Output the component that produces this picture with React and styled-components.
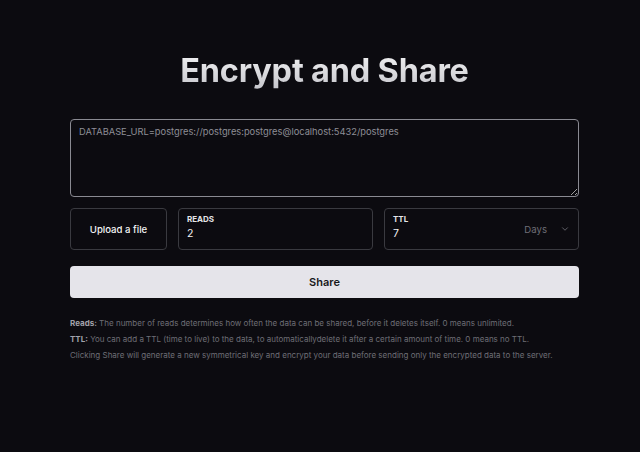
import React from 'react';
import styled, { createGlobalStyle } from 'styled-components';

const GlobalStyle = createGlobalStyle`
  html, body {
    margin: 0;
    padding: 0;
    background: #0c0b10;
    font-family: Inter, "Noto Sans", sans-serif;
  }
  * { box-sizing: border-box; }
`;

const Page = styled.main`
  width: 640px;
  height: 452px;
  background: #0c0b10;
  display: flex;
  flex-direction: column;
  align-items: center;
  padding-top: 51px;
  padding-left: 9px;
`;

const Title = styled.h1`
  margin: 0;
  font-size: 32.5px;
  font-weight: 700;
  line-height: 40px;
  letter-spacing: -0.2px;
  background: linear-gradient(180deg, #f4f4f5 0%, #c4c4ca 100%);
  -webkit-background-clip: text;
  background-clip: text;
  color: transparent;
`;

const Form = styled.div`
  width: 509px;
  margin-top: 28px;
  display: flex;
  flex-direction: column;
`;

const TextArea = styled.textarea`
  width: 100%;
  height: 78px;
  background: #0c0b10;
  border: 1px solid #8a8a92;
  border-radius: 4px;
  color: #8e8e96;
  font-family: Inter, "Noto Sans", sans-serif;
  font-size: 9.3px;
  padding: 6px 8px;
  resize: vertical;
  outline: none;
`;

const Row = styled.div`
  display: grid;
  grid-template-columns: 97px 1fr 1fr;
  gap: 11px;
  margin-top: 11px;
`;

const UploadButton = styled.button`
  height: 42px;
  background: #0c0b10;
  border: 1px solid #3a3a40;
  border-radius: 4px;
  color: #f4f4f5;
  font-family: Inter, "Noto Sans", sans-serif;
  font-size: 9.6px;
  font-weight: 500;
`;

const Field = styled.label`
  position: relative;
  height: 42px;
  border: 1px solid #3a3a40;
  border-radius: 4px;
  padding: 5px 8px;
  display: flex;
  flex-direction: column;
  justify-content: flex-start;
`;

const FieldLabel = styled.span`
  font-size: 8px;
  font-weight: 700;
  color: #e4e4e7;
  line-height: 10px;
`;

const FieldValue = styled.span`
  font-size: 10.5px;
  color: #f4f4f5;
  line-height: 14px;
  margin-top: 3px;
`;

const Unit = styled.div`
  position: absolute;
  right: 8px;
  top: 0;
  bottom: 0;
  display: flex;
  align-items: center;
  gap: 13px;
  color: #6e6e76;
  font-size: 9.6px;
`;

const ShareButton = styled.button`
  margin-top: 16px;
  height: 32px;
  border: none;
  border-radius: 4px;
  background: #e5e4ea;
  color: #18181b;
  font-family: Inter, "Noto Sans", sans-serif;
  font-size: 11px;
  font-weight: 600;
`;

const Notes = styled.div`
  margin-top: 20px;
  display: flex;
  flex-direction: column;
  gap: 5px;
`;

const Note = styled.p`
  margin: 0;
  font-size: 8px;
  line-height: 11px;
  color: #6e6e76;
  b {
    color: #a1a1aa;
    font-weight: 700;
  }
`;

const Chevron = () => (
  <svg width="10" height="10" viewBox="0 0 24 24" fill="none" stroke="#71717a" strokeWidth="2" strokeLinecap="round" strokeLinejoin="round">
    <path d="m6 9 6 6 6-6" />
  </svg>
);

export default function App() {
  return (
    <>
      <GlobalStyle />
      <Page>
        <Title>Encrypt and Share</Title>
        <Form>
          <TextArea defaultValue="DATABASE_URL=postgres://postgres:postgres@localhost:5432/postgres" />
          <Row>
            <UploadButton>Upload a file</UploadButton>
            <Field>
              <FieldLabel>READS</FieldLabel>
              <FieldValue>2</FieldValue>
            </Field>
            <Field>
              <FieldLabel>TTL</FieldLabel>
              <FieldValue>7</FieldValue>
              <Unit>
                <span>Days</span>
                <Chevron />
              </Unit>
            </Field>
          </Row>
          <ShareButton>Share</ShareButton>
          <Notes>
            <Note><b>Reads:</b> The number of reads determines how often the data can be shared, before it deletes itself. 0 means unlimited.</Note>
            <Note><b>TTL:</b> You can add a TTL (time to live) to the data, to automaticallydelete it after a certain amount of time. 0 means no TTL.</Note>
            <Note>Clicking Share will generate a new symmetrical key and encrypt your data before sending only the encrypted data to the server.</Note>
          </Notes>
        </Form>
      </Page>
    </>
  );
}
